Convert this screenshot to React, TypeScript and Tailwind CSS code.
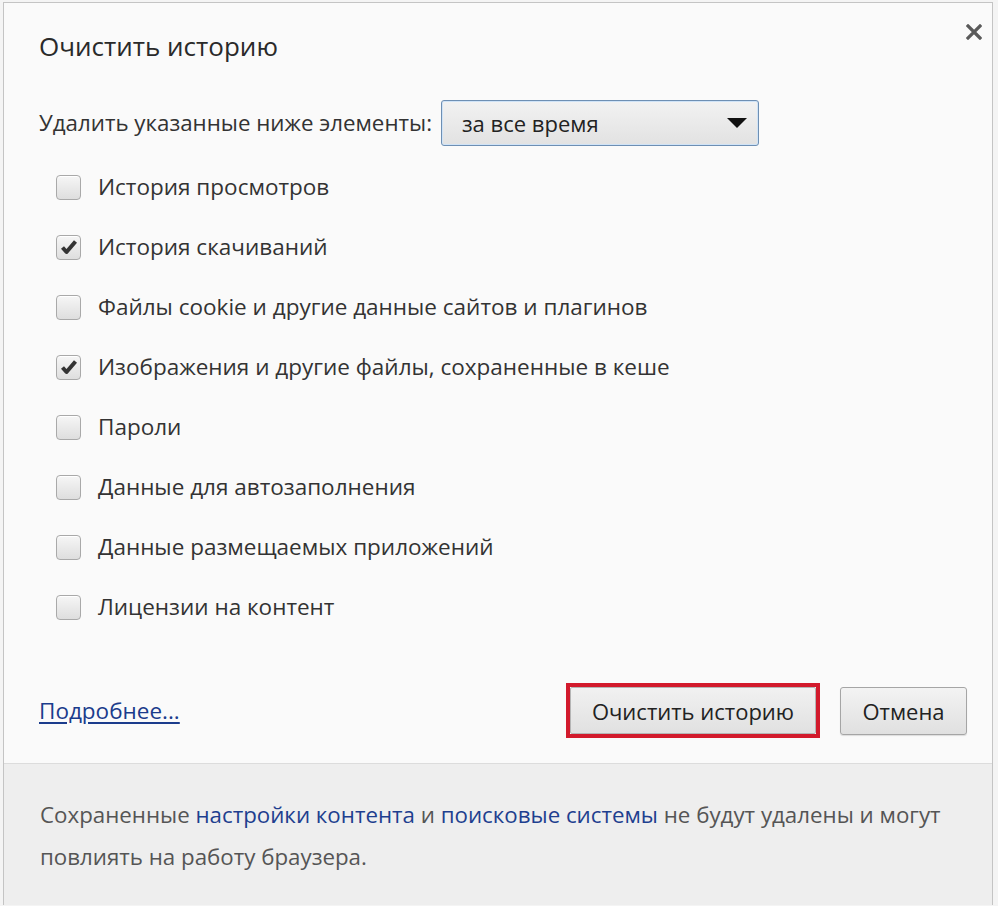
import React from "react";

const items: { label: string; checked: boolean }[] = [
  { label: "История просмотров", checked: false },
  { label: "История скачиваний", checked: true },
  { label: "Файлы cookie и другие данные сайтов и плагинов", checked: false },
  { label: "Изображения и другие файлы, сохраненные в кеше", checked: true },
  { label: "Пароли", checked: false },
  { label: "Данные для автозаполнения", checked: false },
  { label: "Данные размещаемых приложений", checked: false },
  { label: "Лицензии на контент", checked: false },
];

function Checkbox({ checked }: { checked: boolean }) {
  return (
    <span className="flex h-[25px] w-[25px] shrink-0 items-center justify-center rounded-[4px] border border-[#a9a9a9] bg-gradient-to-b from-[#f6f6f6] to-[#dedede] shadow-[inset_0_1px_0_#ffffff]">
      {checked && (
        <svg width="18" height="16" viewBox="0 0 18 16">
          <path d="M2.5 8.5 L6.5 13 L15.5 2.5" fill="none" stroke="#333333" strokeWidth="4" strokeLinejoin="round" />
        </svg>
      )}
    </span>
  );
}

export default function App() {
  return (
    <div className="min-h-[906px] bg-[#f4f4f4] pl-[3px] pr-[5px] pt-[2px] font-['Open_Sans',sans-serif] text-[#333333]">
      <div className="relative border-l border-r border-t border-[#c4c4c4] bg-[#fafafa]">
        <button className="absolute right-[10px] top-[21px]" aria-label="Закрыть">
          <svg width="16" height="16" viewBox="0 0 16 16">
            <path d="M2 2 L14 14 M14 2 L2 14" stroke="#5a5a5a" strokeWidth="3.2" strokeLinecap="square" />
          </svg>
        </button>

        <div className="pl-[35px] pr-[25px] pt-[27px]">
          <h1 className="text-[26px] leading-[32px] text-[#2a2a2a]">Очистить историю</h1>

          <div className="mt-[38px] flex items-center gap-[9px]">
            <span className="text-[22.3px] leading-[28px]">Удалить указанные ниже элементы:</span>
            <div className="flex h-[46px] w-[318px] items-center justify-between rounded-[3px] border border-[#6e8fb3] bg-gradient-to-b from-[#f2f2f2] to-[#e2e2e2] pl-[20px] pr-[10px] shadow-[inset_0_0_0_1px_#cfe3f7]">
              <span className="text-[22px] leading-[28px] text-[#222222]">за все время</span>
              <svg width="22" height="12" viewBox="0 0 22 12">
                <path d="M1 1 H21 L11 11 Z" fill="#111111" />
              </svg>
            </div>
          </div>

          <ul className="mt-[11px] flex flex-col pl-[17px]">
            {items.map((it) => (
              <li key={it.label} className="flex h-[60px] items-center gap-[17px]">
                <Checkbox checked={it.checked} />
                <span className="text-[22.5px] leading-[28px]">{it.label}</span>
              </li>
            ))}
          </ul>

          <div className="mt-[46px] flex items-center justify-between pb-[25px]">
            <a href="#" className="text-[22.5px] leading-[28px] text-[#1b3c8c] underline underline-offset-[3px]">
              Подробнее...
            </a>
            <div className="flex items-center gap-[20px]">
              <div className="border-[4px] border-[#d21a2c]">
                <button className="flex h-[47px] w-[246px] items-center justify-center rounded-[2px] border border-[#b5b5b5] bg-gradient-to-b from-[#f1f1f1] to-[#e1e1e1] text-[22px] leading-[28px] text-[#222222]">
                  Очистить историю
                </button>
              </div>
              <button className="flex h-[48px] w-[127px] items-center justify-center rounded-[3px] border border-[#a5a5a5] bg-gradient-to-b from-[#f3f3f3] to-[#e0e0e0] text-[22px] leading-[28px] text-[#222222] shadow-[0_1px_1px_rgba(0,0,0,0.12)]">
                Отмена
              </button>
            </div>
          </div>
        </div>

        <div className="min-h-[142px] border-t border-[#dcdcdc] bg-[#eeeeee] pl-[36px] pr-[16px] pt-[30px] pb-[20px]">
          <p className="text-[22.3px] leading-[42px] text-[#555555]">
            Сохраненные <a href="#" className="text-[#1e3f8f]">настройки контента</a> и{" "}
            <a href="#" className="text-[#1e3f8f]">поисковые системы</a> не будут удалены и могут
            повлиять на работу браузера.
          </p>
        </div>
      </div>
    </div>
  );
}
